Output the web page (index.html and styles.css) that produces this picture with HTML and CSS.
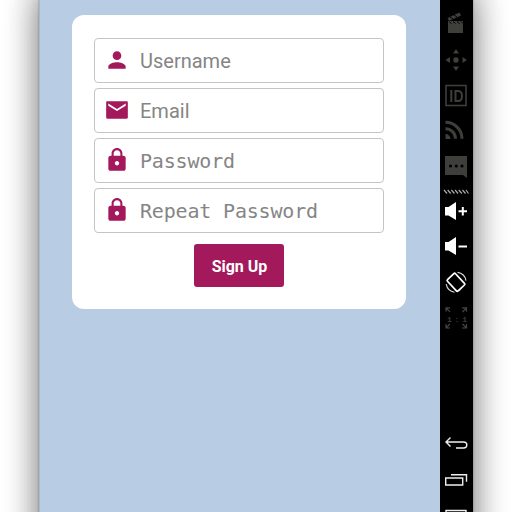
FILE: index.html
```html
<!DOCTYPE html>
<html lang="en">
<head>
<meta charset="utf-8">
<title>Sign Up</title>
<link rel="stylesheet" href="styles.css">
</head>
<body>
<div class="device">
  <main class="screen">
    <form class="card">
      <label class="field">
        <svg class="icon" viewBox="0 0 24 24"><path d="M12 12c2.21 0 4-1.79 4-4s-1.79-4-4-4-4 1.79-4 4 1.79 4 4 4zm0 2c-2.67 0-8 1.34-8 4v2h16v-2c0-2.66-5.33-4-8-4z"/></svg>
        <span class="hint">Username</span>
      </label>
      <label class="field">
        <svg class="icon" viewBox="0 0 24 24"><path d="M21 4H3c-.6 0-1 .4-1 1v14c0 .6.4 1 1 1h18c.6 0 1-.4 1-1V5c0-.6-.4-1-1-1zm-1 4l-8 5-8-5V6l8 5 8-5v2z"/></svg>
        <span class="hint">Email</span>
      </label>
      <label class="field">
        <svg class="icon" viewBox="0 0 24 24"><path d="M18 8h-1V6c0-2.760-2.240-5-5-5S7 3.240 7 6v2H6c-1.100 0-2 .9-2 2v10c0 1.100.9 2 2 2h12c1.100 0 2-.9 2-2V10c0-1.100-.9-2-2-2zm-6 9c-1.100 0-2-.9-2-2s.9-2 2-2 2 .9 2 2-.9 2-2 2zm3.100-9H8.900V6c0-1.710 1.390-3.100 3.100-3.100s3.100 1.390 3.100 3.100v2z"/></svg>
        <span class="hint mono">Password</span>
      </label>
      <label class="field">
        <svg class="icon" viewBox="0 0 24 24"><path d="M18 8h-1V6c0-2.760-2.240-5-5-5S7 3.240 7 6v2H6c-1.100 0-2 .9-2 2v10c0 1.100.9 2 2 2h12c1.100 0 2-.9 2-2V10c0-1.100-.9-2-2-2zm-6 9c-1.100 0-2-.9-2-2s.9-2 2-2 2 .9 2 2-.9 2-2 2zm3.100-9H8.900V6c0-1.710 1.390-3.100 3.100-3.100s3.100 1.390 3.100 3.100v2z"/></svg>
        <span class="hint mono">Repeat Password</span>
      </label>
      <button class="submit" type="button">Sign Up</button>
    </form>
  </main>
  <aside class="toolbar">
    <svg class="tool dim" viewBox="440 6 33 36"><path d="M448 21h15v12h-15z"/><path d="M447.500 18l12-5.500 1.500 3-12 5.500z"/><path d="M449 21.500l2.500 2M453 21.500l2.500 2M457 21.500l2.500 2M461 21.500l2 2M450 17l3 2M454 15l3 2" stroke="#000" stroke-width="1"/></svg>
    <svg class="tool dim" viewBox="440 42 33 36"><circle cx="456" cy="60" r="2.700"/><path d="M456 49l3 4.500h-6zM456 71l-3-4.500h6zM445.500 60l4.500-3v6zM467 60l-4.500-3v6z"/></svg>
    <svg class="tool dim" viewBox="440 78 33 36"><rect x="446" y="85.500" width="20" height="20" fill="none" stroke="#3e3e3a" stroke-width="1.600"/><path d="M451.300 90v12M455.500 91h2.500q4 0 4 5t-4 5h-2.500z" fill="none" stroke="#3e3e3a" stroke-width="2"/></svg>
    <svg class="tool dim" viewBox="440 114 33 36"><path d="M445.500 122.300a16.500 16.500 0 0 1 16.500 16.500M445.500 128.700a10 10 0 0 1 10 10" fill="none" stroke="#3e3e3a" stroke-width="3"/><path d="M445.500 134a5 5 0 0 1 5 5h-5z"/></svg>
    <svg class="tool dim" viewBox="440 150 33 36"><path d="M445 156h22v22l-4-3h-18z"/><g fill="#000"><circle cx="450.500" cy="166" r="1.600"/><circle cx="456.300" cy="166" r="1.600"/><circle cx="462" cy="166" r="1.600"/></g></svg>
    <svg class="grip" viewBox="440 186 33 11"><path d="M444 190l3 3.500M447.700 190l3 3.500M451.400 190l3 3.500M455.100 190l3 3.500M458.800 190l3 3.500M462.500 190l3 3.500M466 190l2.500 3.500" stroke="#aaa" stroke-width="1.200"/></svg>
    <svg class="tool" viewBox="440 197 33 36"><path d="M445 207h3.500l7.500-5v18l-7.500-4.500H445z"/><path d="M458.500 211.200h8.500M462.800 207v8.500" stroke="#fff" stroke-width="2"/></svg>
    <svg class="tool" viewBox="440 233 33 36"><path d="M445 242h3.500l7.500-5v18l-7.500-4.500H445z"/><path d="M458.500 246.500h8.500" stroke="#fff" stroke-width="2"/></svg>
    <svg class="tool" viewBox="440 269 33 36"><rect x="450.500" y="274.500" width="11" height="15.500" rx="1.200" transform="rotate(-43 456 282.300)" fill="none" stroke="#fff" stroke-width="1.700"/><path d="M457.500 272.400a10 10 0 0 1 8.500 8.200M454.500 292.200a10 10 0 0 1-8.300-8M459 291l6-6.500" fill="none" stroke="#ddd" stroke-width="1.100"/></svg>
    <svg class="tool dim" viewBox="440 305 33 36"><path d="M446 311.500v-3.700h4M446 307.800l4 4M462 307.800h4.500v4M462.500 312l4-4M446 324v4h4M446 328l4-4M466.500 324v4H462M466.500 328l-4-4" fill="none" stroke="#444440" stroke-width="1.200"/><text class="ratio" x="456.500" y="321.500">1 : 1</text></svg>
    <svg class="tool nav" viewBox="440 425 33 36"><path d="M446 442h17.500q3.300 0 3.300 3t-3.300 3H456M450.500 437.500l-4.500 4.500 4.500 4.500"/></svg>
    <svg class="tool nav" viewBox="440 461 33 36"><path d="M445.700 478h17v7h-17zM451 474.700h15.500v7"/></svg>
    <svg class="tool nav" viewBox="440 497 33 36"><path d="M446 510.500h20v18h-20z"/></svg>
  </aside>
</div>
</body>
</html>
```
FILE: styles.css
```css
* {
  box-sizing: border-box;
}

body {
  margin: 0;
  height: 512px;
  overflow: hidden;
  background: #fff;
  font-family: Roboto, sans-serif;
}

.device {
  display: flex;
  width: 434px;
  height: 580px;
  margin-left: 39px;
  box-shadow: 0 0 32px rgba(0, 0, 0, 0.32), 0 -20px 32px rgba(0, 0, 0, 0.32), 0 0 2px rgba(0, 0, 0, 0.3);
}

.screen {
  width: 401px;
  padding: 15px 33px;
  background: #b8cce4;
  border-left: 1px solid #a5bad2;
}

.card {
  display: flex;
  flex-direction: column;
  gap: 5px;
  width: 334px;
  height: 294px;
  padding: 23px 22px 22px;
  margin-left: -1px;
  background: #fff;
  border-radius: 12px;
}

.field {
  display: flex;
  flex: none;
  align-items: center;
  gap: 10px;
  width: 290px;
  height: 45px;
  padding: 0 0 1px 9px;
  border: 1px solid #c4c4c4;
  border-radius: 4px;
}

.icon {
  width: 26px;
  height: 26px;
  fill: #a3195b;
}

.hint {
  padding-top: 2px;
  font-size: 20px;
  line-height: 24px;
  color: #858585;
}

.mono {
  font-family: "DejaVu Sans Mono", monospace;
  font-size: 20px;
  letter-spacing: -0.180px;
}

.submit {
  flex: none;
  align-self: center;
  width: 90px;
  height: 43px;
  margin-top: 6px;
  padding: 2px 0 0 1px;
  border: 0;
  border-radius: 3px;
  background: #a3195b;
  color: #fff;
  font: bold 16px Roboto, sans-serif;
}

.toolbar {
  display: flex;
  flex-direction: column;
  width: 33px;
  padding-top: 6px;
  background: #000;
}

.tool {
  flex: none;
  width: 33px;
  height: 36px;
  fill: #fff;
}

.dim {
  fill: #3e3e3a;
}

.grip {
  flex: none;
  width: 33px;
  height: 11px;
}

.ratio {
  font: bold 8px "Liberation Mono", monospace;
  letter-spacing: -1px;
  text-anchor: middle;
}

.nav {
  fill: none;
  stroke: #eee;
  stroke-width: 1.400;
}

.dim + .nav {
  margin-top: 84px;
}
```
